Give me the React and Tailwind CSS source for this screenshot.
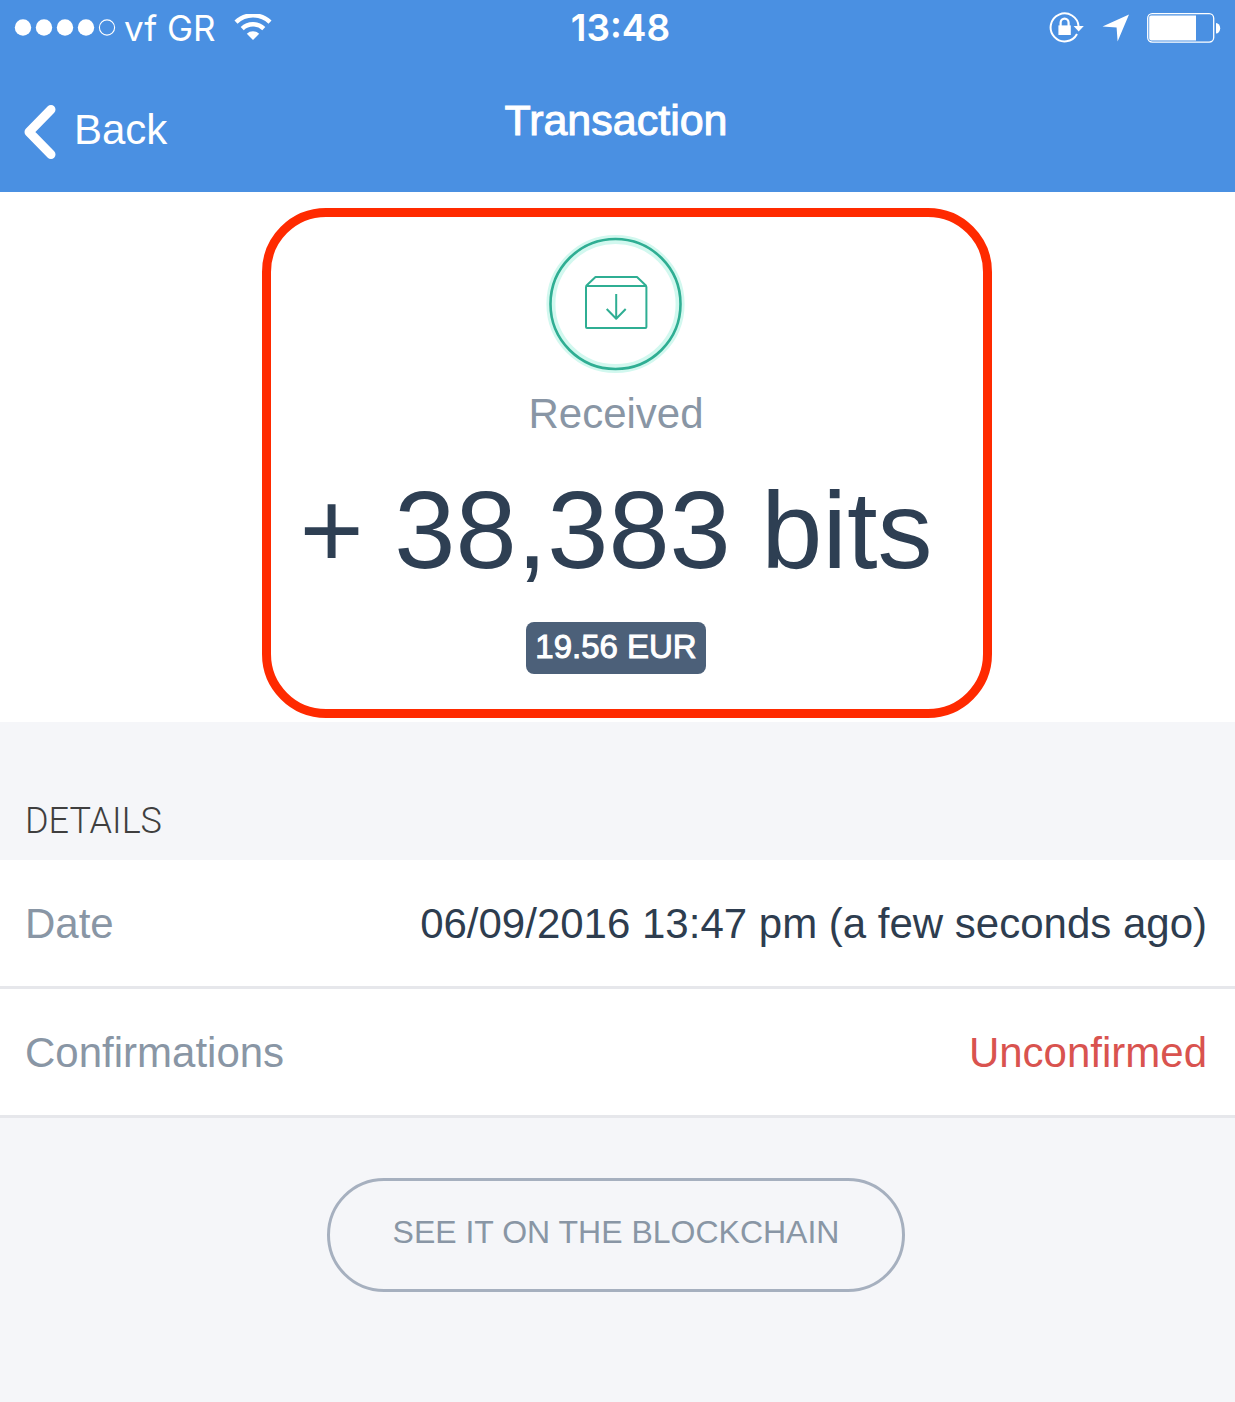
const DETAILS = [
  { label: "Date", value: "06/09/2016 13:47 pm (a few seconds ago)", tone: "text-[#2e3d4f]" },
  { label: "Confirmations", value: "Unconfirmed", tone: "text-[#d9534f]" },
];

function SignalDots() {
  return (
    <svg className="h-[18px] w-[102px]" viewBox="0 0 102 18" aria-hidden="true">
      {[9, 30, 51, 72].map((x) => (
        <circle key={x} cx={x} cy="8.5" r="8.2" fill="white" />
      ))}
      <circle cx="93" cy="8.5" r="7.6" fill="none" stroke="white" strokeWidth="1.1" />
    </svg>
  );
}

function WifiIcon() {
  return (
    <svg className="h-7 w-[38px]" viewBox="0 0 38 28" fill="none" stroke="white" aria-hidden="true">
      <path d="M2 8.2 A24.5 24.5 0 0 1 36 8.2" strokeWidth="4.4" />
      <path d="M8.2 14.6 A15.6 15.6 0 0 1 29.8 14.6" strokeWidth="4.4" />
      <path d="M12.8 19.8 A9 9 0 0 1 25.2 19.8 L19 26 Z" fill="white" stroke="none" />
    </svg>
  );
}

function RotationLockIcon() {
  return (
    <svg className="h-8 w-9" viewBox="0 0 36 32" fill="none" aria-hidden="true">
      <path d="M28 22 A14 14 0 1 1 29.6 14.5" stroke="white" strokeWidth="2" />
      <path d="M24.6 14 H34.8 L29.7 19.6 Z" fill="white" />
      <rect x="9.4" y="13.4" width="12.4" height="9.6" fill="white" />
      <path d="M11.6 14 V10.8 A4 4.2 0 0 1 19.6 10.8 V14" stroke="white" strokeWidth="2.2" />
    </svg>
  );
}

function LocationIcon() {
  return (
    <svg className="h-7 w-7" viewBox="0 0 28 28" fill="white" aria-hidden="true">
      <path d="M27 .5 L15.6 27.5 L14.6 13.4 L.5 12.4 Z" />
    </svg>
  );
}

function BatteryIcon() {
  return (
    <svg className="h-[30px] w-[74px]" viewBox="0 0 74 30" aria-hidden="true">
      <rect x=".7" y=".7" width="66" height="28.4" rx="4.5" fill="none" stroke="white" strokeWidth="1.3" />
      <path d="M4 2.4 H49 V27.4 H4 A1.8 1.8 0 0 1 2.2 25.6 V4.2 A1.8 1.8 0 0 1 4 2.4 Z" fill="white" />
      <path d="M69 10 A4.2 5.2 0 0 1 69 20.4 Z" fill="white" />
    </svg>
  );
}

function ReceivedIcon() {
  return (
    <svg className="h-[140px] w-[140px]" viewBox="0 0 140 140" fill="none" aria-hidden="true">
      <circle cx="69.5" cy="70" r="64.6" stroke="#d2f8ef" strokeWidth="9" />
      <circle cx="69.5" cy="70" r="65" stroke="#2fae93" strokeWidth="2.6" />
      <g stroke="#2fae93" strokeWidth="2" strokeLinejoin="round">
        <rect x="40" y="52" width="60.4" height="42" rx="1" />
        <path d="M40 52 L49.5 43 H91 L100.4 52" />
        <path d="M70.2 60 V84.5 M60.7 75 L70.2 84.8 L79.7 75" />
      </g>
    </svg>
  );
}

export default function App() {
  return (
    <div className="min-h-screen bg-[#f5f6f9] font-['Liberation_Sans',Arial,sans-serif] text-[42px] leading-[48px]">
      <header className="bg-[#4a90e2] text-white">
        <div className="grid h-14 grid-cols-[1fr_auto_1fr] items-center pr-[14px] pl-[14px] font-['Inter',sans-serif] text-[37px] leading-[44px]">
          <div className="flex items-center gap-2">
            <SignalDots />
            <span className="text-[35px]">vf GR</span>
            <span className="ml-[10px]">
              <WifiIcon />
            </span>
          </div>
          <time className="pl-1.5 font-semibold">13:48</time>
          <div className="flex items-center justify-end gap-[17px]">
            <RotationLockIcon />
            <LocationIcon />
            <BatteryIcon />
          </div>
        </div>
        <nav className="grid h-[136px] grid-cols-[1fr_auto_1fr] items-start px-6 pt-10">
          <button type="button" className="flex items-center gap-[18px] justify-self-start pt-2">
            <svg className="h-14 w-8" viewBox="0 0 32 56" fill="none" stroke="white" strokeWidth="9" strokeLinecap="round" strokeLinejoin="round" aria-hidden="true">
              <path d="M27 5.5 L5 28 L27 50.5" />
            </svg>
            <span className="pb-1">Back</span>
          </button>
          <h1 className="pr-[3px] text-[43px] [-webkit-text-stroke:1px_white]">Transaction</h1>
        </nav>
      </header>

      <main>
        <section className="relative flex h-[530px] flex-col items-center bg-white pt-[42px] pr-[3px]">
          <div className="absolute top-4 right-[19.7%] bottom-1 left-[21.2%] rounded-[64px] border-[9px] border-[#ff2a00]" />
          <ReceivedIcon />
          <p className="mt-4 text-[#8996a5]">Received</p>
          <p className="mt-8 text-[110px] leading-[120px] text-[#2e3f53]">+ 38,383 bits</p>
          <p className="mt-8 rounded-lg bg-[#4c6079] px-[9px] pt-[5px] pb-[7px] text-[33px] leading-10 text-white [-webkit-text-stroke:1px_white]">
            19.56 EUR
          </p>
        </section>

        <h2 className="px-[25px] pt-[77px] pb-[17px] font-['Roboto',sans-serif] text-[36px] leading-[44px] font-light text-[#3f3f3f]">
          DETAILS
        </h2>
        <dl className="bg-white">
          {DETAILS.map((item) => (
            <div
              key={item.label}
              className="flex items-center justify-between border-b-[3px] border-[#e6e7eb] pt-10 pr-7 pb-[38px] pl-[25px]"
            >
              <dt className="text-[#8996a5]">{item.label}</dt>
              <dd className={item.tone}>{item.value}</dd>
            </div>
          ))}
        </dl>

        <div className="flex justify-center pt-[60px] pr-[3px] pb-28">
          <button
            type="button"
            className="rounded-full border-[3px] border-[#a6b0bf] px-[63px] pt-[31px] pb-[37px] text-[32px] leading-10 text-[#8996a5]"
          >
            SEE IT ON THE BLOCKCHAIN
          </button>
        </div>
      </main>
    </div>
  );
}
